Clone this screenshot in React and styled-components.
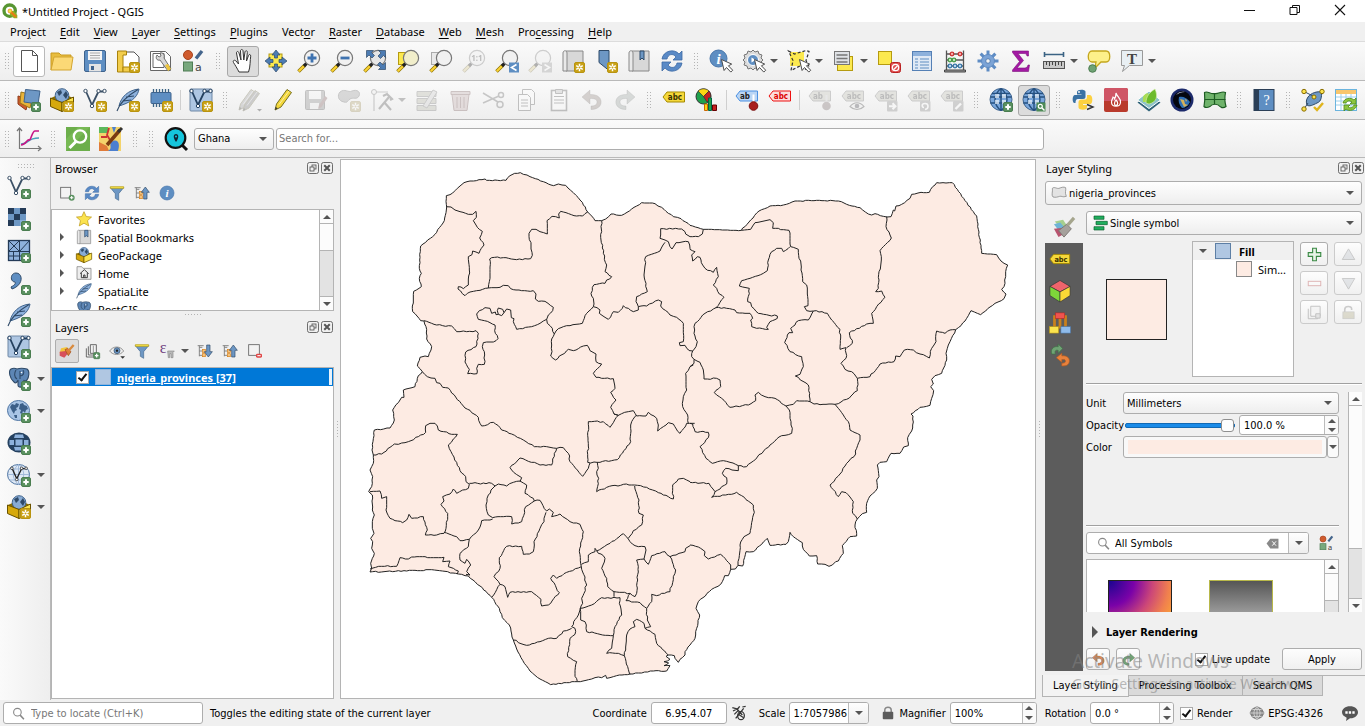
import React, { useState } from "react";
import styled, { createGlobalStyle, css } from "styled-components";

const UI_FONT = `"Noto Sans", "Open Sans", sans-serif`;
const FORM_FONT = `"DejaVu Sans Condensed", "DejaVu Sans", sans-serif`;

const Global = createGlobalStyle`
  *, *::before, *::after { box-sizing: border-box; }
  body { margin: 0; background: #f0f0f0; color: #000; font-family: ${UI_FONT}; font-size: 11px; }
  button, input, select { font: inherit; color: inherit; margin: 0; padding: 0; border: 0; background: none; }
  a { color: inherit; text-decoration: none; }
  svg { display: block; flex: none; }
`;

/* ---------- icon parts ---------- */

const BLUE = "#6d97c4";
const NAVY = "#2f4a68";

const Plus = () => (
  <g>
    <rect x="14.5" y="14.5" width="9" height="9" rx="1.5" fill="#5a9160" stroke="#4a7d50" />
    <path d="M19 16.3v5.4M16.3 19h5.4" stroke="#fff" strokeWidth="2" />
  </g>
);
const Star = () => (
  <g>
    <rect x="13.5" y="13.5" width="10" height="10" rx="1.5" fill="#c9a217" stroke="#b8930f" />
    <path d="M18.5 14.8v7.4M15.2 16.6l6.6 3.8M15.2 20.4l6.6-3.8" stroke="#fff" strokeWidth="1.5" />
    <circle cx="18.5" cy="18.5" r="1" fill="#c9a217" />
  </g>
);
const Cursor = () => (
  <path d="M12.5 10.5l2.6 11 2.4-3 4.3 4.6 1.9-1.9-4.3-4.4 3.3-1.7z" fill="#fff" stroke="#4c4c4c" />
);
const Lens = ({ fill = "#f1f1f1" }) => (
  <g>
    <path d="M1.5 22.5l6-6" stroke="#8f7400" strokeWidth="3.6" />
    <path d="M1.8 22.2l5-5" stroke="#fbd335" strokeWidth="2.2" />
    <path d="M7 17l2.6-2.6" stroke="#222" strokeWidth="3.2" />
    <circle cx="15" cy="9" r="7.6" fill={fill} stroke="#777" strokeWidth="1.2" />
  </g>
);
const Globe = ({ land = true }) => (
  <g>
    <ellipse cx="11.5" cy="11.5" rx="11" ry="10" fill={land ? "#a9c5e6" : "#dfe9f5"} stroke="#4f75a3" />
    {land ? (
      <path d="M3 8l2-3 3 1 1-2 3 1-1 3-2 1 1 2-2 1-1 3-2-3zM13 5l3-1 1 2 3 1 1 3-2 1-1 3-2-2-1 3-2-1 1-3-2-1zM7 16l3 0 0 3-2 0zM14 16l3 1-2 2z" fill="#3c5f88" />
    ) : (
      <path d="M1 11.5h21M3 6h17M3 17h17M11.5 1.5v20M11.5 1.5c-7 6-7 14 0 20M11.5 1.5c7 6 7 14 0 20" fill="none" stroke="#9db7d8" strokeWidth=".9" />
    )}
  </g>
);
const Tag = ({ fill = "#f5d83a", stroke = "#a58a00", ink = "#3a3200", label = "abc", y = 3 }) => (
  <g>
    <path d={`M1 ${y + 5}l4-5h17.5v10h-17.5z`} fill={fill} stroke={stroke} />
    <text x={label.length === 2 ? 10 : 13} y={y + 8} fontSize="8" fontWeight="700" textAnchor="middle" fill={ink} fontFamily="DejaVu Sans Condensed, sans-serif">{label}</text>
  </g>
);
const Vee = ({ ink = "#3b5066" }) => (
  <g fill="none" stroke={ink}>
    <path d="M3 3.5L9 17 15.5 3.5h5" strokeWidth="1.8" />
    <g fill="#fff" strokeWidth="1">
      <circle cx="2.5" cy="3" r="1.7" /><circle cx="9" cy="18" r="1.7" /><circle cx="15.5" cy="3" r="1.7" /><circle cx="21.5" cy="3" r="1.7" />
    </g>
  </g>
);
const Feather = () => (
  <g>
    <path d="M3 18C5 9 12 2 23 1c-1 6-5 12-17 16z" fill="#8db1dc" stroke="#3f638c" />
    <path d="M1 23C4 14 11 8 22 1.5M7 13l8-1M10 9l8-1" fill="none" stroke="#2f4a68" strokeWidth="1.1" />
  </g>
);
const Box = () => (
  <g>
    <path d="M1 10l11-5 11 5v8l-11 5.5-11-5.5z" fill="#8a6d00" />
    <circle cx="12" cy="7.5" r="6.8" fill="#88abd4" stroke="#3f638c" />
    <path d="M7 4l4-2 1 3-3 3zM13 7l3-4 2 4-2 4z" fill="#2f4a68" />
    <path d="M.5 10L12 14.500v9L.5 18.500z" fill="#d6a90c" stroke="#6b5300" />
    <path d="M23.500 9L12 14.500v9l11.500-5z" fill="#fbe34e" stroke="#6b5300" />
  </g>
);
const Elephant = () => (
  <g fill="#5d86b5" stroke="#2f4a68" strokeWidth="1.100">
    <path d="M4 2c2-1 4-1 6 0 3-1 6-1 10 0 3 2 2 8 0 11-1 1-3 1-3 0l-1 4c0 4-5 4-5 1v-5c-1 2-2 4-4 2C3 12 1 4 4 2z" />
    <path d="M9 3c-2 3-2 7 1 9M16 3c2 3 0 6-3 6M13 4v8" fill="none" />
    <circle cx="14.500" cy="5.500" r=".8" fill="#fff" stroke="none" />
  </g>
);
const Pencil = ({ fill = "#f3d73a" }) => (
  <g>
    <path d="M4 22l1.500-6L16 1.500l4.500 3L10 19z" fill={fill} stroke="#77701e" />
    <path d="M4 22l.700-3 2 1.300z" fill="#333" />
    <path d="M8 16.500L18 3" stroke="#fff" strokeWidth=".8" opacity=".7" />
  </g>
);
const Gear = () => (
  <g>
    <path d="M12 1.500v21M1.500 12h21M4.600 4.600l14.800 14.800M19.400 4.600L4.600 19.400" stroke="#5e8cc4" strokeWidth="3" />
    <circle cx="12" cy="12" r="6.500" fill="#7ba3d6" stroke="#5e8cc4" />
    <circle cx="12" cy="12" r="2.300" fill="#f3f3f3" stroke="#5580b5" />
  </g>
);
const Refresh = () => (
  <g fill="#5a8ac6" stroke="#3d6ba5" strokeWidth=".8">
    <path d="M2 10C3 2 14-1 19 5l3-3v9h-9l3-3c-3-4-8-3-9 2z" />
    <path d="M22 14c-1 8-12 11-17 5l-3 3v-9h9l-3 3c3 4 8 3 9-2z" />
  </g>
);
const Swatches = () => (
  <g>
    <circle cx="6" cy="6" r="4.500" fill="#cf5b2e" stroke="#a8431c" />
    <path d="M14 9.500L20 2" stroke="#44658c" strokeWidth="3.400" />
    <rect x="1.500" y="13" width="9" height="9" fill="#78a87d" stroke="#4f7c54" />
    <text x="13" y="22" fontSize="11" fill="#444" fontFamily="DejaVu Sans, sans-serif">a</text>
  </g>
);
const TreeArrow = ({ down }) => (
  <g>
    <path d="M3.500 4v16M3.500 6.500H8M3.500 12H8M3.500 18.500H8" fill="none" stroke="#777" strokeWidth="1.300" />
    <path d="M1 4h9" stroke="#777" strokeWidth="1.300" />
    <rect x="8" y="9.500" width="4.500" height="4.500" fill="#f3c27c" stroke="#d77f17" />
    <rect x="8" y="16" width="4.500" height="4.500" fill="#f3c27c" stroke="#d77f17" />
    <path d={down ? "M14.500 3h5v10h3.500L17 21l-6-8h3.500z" : "M14.500 21h5V11H23l-6-8-6 8h3.500z"} fill={BLUE} stroke={NAVY} />
  </g>
);
const Curl = ({ color, flip }) => (
  <path transform={flip ? "translate(24 0) scale(-1 1)" : undefined} d="M2 9l8-7v4.500c8-.5 12 4 11 9-1 4-5 6-10 6v-3.500c4 0 6-1.500 6-4s-2-3.500-7-3.500V16z" fill={color} stroke="rgba(0,0,0,.25)" />
);
const Funnel = () => (
  <g>
    <path d="M2 4h20l-7.500 9v10l-5-3v-7z" fill={BLUE} stroke="#46698f" />
    <path d="M2 2.500h20v2.500H2z" fill="#fce94f" stroke="#b59b10" />
  </g>
);
const Book = () => (
  <g>
    <path d="M5 2h17v20H5z" fill="#d8d8d8" stroke="#888" />
    <path d="M2 4c0-3 4-3 4 0v18H2z" fill="#e9e9e9" stroke="#888" />
  </g>
);
const WebGlobe = () => (
  <g>
    <circle cx="12" cy="11.500" r="11" fill="#7aa7dc" stroke="#3f638c" />
    <path d="M1.500 9h21M3 5.500h18M1.500 15h21M12 .5v22M12 .5c-8 6-8 16 0 22M12 .5c8 6 8 16 0 22" fill="none" stroke="#25507f" strokeWidth="1.400" />
    <path d="M6 6h4v4H6zM13 6h4v4h-4zM6 12h4v4H6zM13 12h4v4h-4z" fill="#e7f0fa" opacity=".75" />
  </g>
);
const OffTag = ({ label, children }) => (
  <g>
    <Tag fill="#bdbda0" stroke="#777" ink="#444" label={label} />
    {children}
  </g>
);
const GreyBadge = () => <rect x="13" y="13" width="10.500" height="10.500" rx="1" fill="#888" />;

const ICONS = {
  logo: <g><circle cx="11.500" cy="11.500" r="8.500" fill="#fff" stroke="#589632" strokeWidth="5" /><path d="M12 12l6 0 5 6v5h-5l-6-5z" fill="#93b023" /><path d="M12 12l9 9" stroke="#ee7913" strokeWidth="3" /><circle cx="12" cy="12" r="3" fill="#f0e64a" stroke="#ee7913" /></g>,
  newFile: <path d="M4.500 1.500h11l5 5v16h-16zM15.500 1.500v5h5" fill="#fff" stroke="#555" />,
  open: <g><path d="M1 21V4h8l2 2h10v4" fill="#e8bd3f" stroke="#c99a20" /><path d="M1 21L4 8h19l-2 13z" fill="#fbd976" stroke="#d3a530" /></g>,
  save: <g><rect x="1.500" y="1.500" width="21" height="21" rx="1.500" fill="#5e8ec2" stroke="#3f638c" /><rect x="5" y="2" width="14" height="9" fill="#f4f4f4" /><path d="M7 4h10M7 6.500h10M7 9h10" stroke="#aaa" /><rect x="6" y="15" width="12" height="7.500" fill="#e4e4e4" /><rect x="8" y="17" width="3" height="4" fill="#3f638c" /></g>,
  layout: <g><path d="M3 3h15l5 5v12H3z" fill="#fff" stroke="#555" /><path d="M1.500 2h9v4H7v17H1.500z" fill="#f2cd4c" stroke="#a8820c" /><path d="M7 18h7v5H7z" fill="#f2cd4c" stroke="#a8820c" /><Star /></g>,
  layoutMgr: <g><path d="M1.500 2.500h15l5 5v14h-20zM4 4.500h11v14H4z" fill="#fff" stroke="#666" /><path d="M8 6c-2 3 0 6 3 5l8 11 3-2-7-11c1-3-1-6-4-5l1 3-2 1z" fill="#d8d8d8" stroke="#555" strokeWidth=".8" /><path d="M16 16l3 6 3-2-3-5z" fill="#edc53d" /></g>,
  swatches: <Swatches />,
  hand: <path d="M8 23C6 19 4 16 2.500 13.500c-1-2 1-3 2.500-1.500l2.500 3L5.500 4c0-2 2-2 2.500 0l2 7-.5-9c0-2 2.500-2 2.500 0l.8 9 1.200-8c.5-2 2.500-1.500 2.300.5L15.500 12l2-5.500c.7-1.700 2.500-1 2.200.7C19 11 19.500 18 17.500 23z" fill="#fff" stroke="#333" />,
  panSel: <g><rect x="5" y="5" width="13" height="13" fill="#fce94f" stroke="#b59b10" /><path d="M12 1l4 5h-2.500v3h-3V6H8zM12 23l4-5h-2.500v-3h-3v3H8zM1 12l5-4v2.500h3v3H6V16zM23 12l-5-4v2.500h-3v3h3V16z" fill="#4d7cb3" stroke={NAVY} strokeWidth=".7" /></g>,
  zoomIn: <g><Lens /><path d="M15 4.500v9M10.500 9h9" stroke="#3f73b0" strokeWidth="2.800" /></g>,
  zoomOut: <g><Lens /><path d="M10.500 9h9" stroke="#3f73b0" strokeWidth="2.800" /></g>,
  zoomFull: <g><Lens fill="#e6e6e6" /><path d="M3.500 1.500h7L8.500 3.500l3 3-2.500 2.500-3-3-2.500 2.500zM22.500 1.500v7L20.500 6.500l-3 3L15 7l3-3-2.500-2.500zM22.500 20.500h-7l2-2-3-3 2.500-2.500 3 3 2.500-2.500z" fill="#4d7cb3" stroke={NAVY} strokeWidth=".7" /></g>,
  zoomSel: <g><rect x="2.500" y="3.500" width="12" height="12" fill="#fce94f" stroke="#b59b10" /><Lens fill="#f1eecb" /></g>,
  zoomLayer: <g><rect x="2.500" y="3.500" width="12" height="12" fill="#e9e9e9" stroke="#aaa" /><Lens /></g>,
  zoom11: <g><Lens /><text x="15" y="12" fontSize="8" fontWeight="700" textAnchor="middle" fill="#444">1:1</text></g>,
  zoomPrev: <g><Lens /><rect x="14" y="13.500" width="10" height="10" fill="#5e8ec2" /><path d="M21.500 15.500l-5 3 5 3" fill="none" stroke="#fff" strokeWidth="1.600" /></g>,
  zoomNext: <g><Lens /><rect x="14" y="13.500" width="10" height="10" fill="#999" /><path d="M16.500 15.500l5 3-5 3" fill="none" stroke="#fff" strokeWidth="1.600" /></g>,
  mapNew: <g><Book /><Star /></g>,
  bookmarkNew: <g><path d="M5 1.500h10v20l-5-4-5-4z" fill={BLUE} stroke={NAVY} /><Star /></g>,
  bookmarks: <g><Book /><path d="M13 2h4v9l-2-2-2 2z" fill={BLUE} stroke={NAVY} /></g>,
  refresh: <Refresh />,
  identify: <g><circle cx="9.500" cy="9.500" r="8.500" fill="#5e8ec2" stroke="#4775aa" /><text x="9.500" y="15" fontSize="15" fontWeight="700" fontStyle="italic" textAnchor="middle" fill="#fff" fontFamily="Liberation Serif, serif">i</text><Cursor /></g>,
  action: <g><path d="M11 1l2 2 3-1 1 3 3 1-1 3 2 2-2 2 1 3-3 1-1 3-3-1-2 2-2-2-3 1-1-3-3-1 1-3-2-2 2-2-1-3 3-1 1-3 3 1z" fill="#dcdcdc" stroke="#777" /><circle cx="11" cy="11" r="5.500" fill="#5e8ec2" stroke="#fff" /><path d="M9.500 8.500v5l4-2.500z" fill="#fff" /><Cursor /></g>,
  select: <g><path d="M3 3h14v14H3z" fill="#fce94f" /><path d="M1.500 2l6 3L19 1.500l3 1-3 9 3 6-4 3-4-4-10 5 2-10z" fill="none" stroke="#333" strokeDasharray="3 2" strokeWidth="1.200" /><Cursor /></g>,
  selectForm: <g><rect x="5.500" y="7.500" width="15" height="14" fill="#fce94f" stroke="#b59b10" /><rect x="2.500" y="2.500" width="15" height="13" fill="#dfe2e6" stroke="#777" /><path d="M4.500 6h11M4.500 9.500h11M4.500 13h11" stroke="#777" strokeWidth="1.300" /></g>,
  deselect: <g><rect x="1.500" y="2.500" width="13" height="13" fill="#fce94f" stroke="#b59b10" /><rect x="13.500" y="13.500" width="10" height="10" rx="2" fill="#e05050" stroke="#b92020" /><circle cx="18.500" cy="18.500" r="3.200" fill="none" stroke="#fff" strokeWidth="1.300" /><path d="M16.500 20.700l4-4" stroke="#fff" strokeWidth="1.300" /></g>,
  table: <g><rect x="2.500" y="2.500" width="19" height="19" fill="#dfe9f5" stroke="#5580b5" /><path d="M3 3h18v4H3z" fill="#8db1dc" /><path d="M5 10h3M5 13h3M5 16h3M5 19h3M10 10h9M10 13h9M10 16h9M10 19h9" stroke="#5e8ec2" strokeWidth="1.200" /></g>,
  abacus: <g fill="none"><path d="M3.500 1.500v20M20.500 1.500v20M3.500 5h17M3.500 11h17M3.500 17h17" stroke="#555" strokeWidth="1.300" /><path d="M1.500 21h21v2h-21z" fill="#999" stroke="#444" /><g strokeWidth="1.300"><g fill="#f7b0b0" stroke="#c33"><circle cx="9" cy="5" r="1.800" /><circle cx="17" cy="5" r="1.800" /></g><g fill="#c8ecc5" stroke="#4a9a4a"><circle cx="7" cy="11" r="1.800" /><circle cx="11" cy="11" r="1.800" /></g><g fill="#c4dcf2" stroke="#3a78a8"><circle cx="7" cy="17" r="1.800" /><circle cx="12" cy="17" r="1.800" /><circle cx="17" cy="17" r="1.800" /></g></g></g>,
  gear: <Gear />,
  sigma: <path d="M3.500 2h16v5h-1.500c-.5-2-1-2.500-3-2.500H9l5.500 7L8 19h7.500c2 0 3-1 3.500-3h1.500l-1 6.500h-16V21l7-8.500-7-9z" fill="#a31aa3" stroke="#7c107c" strokeWidth=".6" />,
  ruler: <g><path d="M2 5.500h20M2.500 3v5M21.500 3v5" stroke="#3b6384" strokeWidth="1.600" /><rect x="1.500" y="12.500" width="21" height="7" fill="#c9c9c9" stroke="#555" /><path d="M4.500 13v3M7.500 13v4M10.500 13v3M13.500 13v4M16.500 13v3M19.500 13v4" stroke="#444" /></g>,
  tips: <g><path d="M5 2h14c5 0 5 11 0 11h-5l-6 6 1-6H5C0 13 0 2 5 2z" fill="#fdf08a" stroke="#c4a61c" strokeWidth="1.300" /><circle cx="5.500" cy="19.500" r="3.800" fill="#6fa374" stroke="#4d7d52" /></g>,
  textNote: <g><path d="M1.500 1.500h21v15h-13l-7 6 2-6h-3z" fill="#e8eff3" stroke="#999" /><text x="12" y="14.500" fontSize="15" fontWeight="700" textAnchor="middle" fill="#444" fontFamily="Liberation Serif, serif">T</text></g>,

  dsManager: <g><path d="M1 8l11 3-3 11-8-6z" fill="#cf5b2e" stroke="#8f3c18" /><path d="M4 4l12 3-3 13-10-5z" fill="#e8b33a" stroke="#9a7414" /><path d="M8.500 1.500L23 3l-2 13-14-2z" fill={BLUE} stroke="#3f638c" /><Plus /></g>,
  newGpkg: <g><Box /><Star /></g>,
  newShp: <g><Vee /><Star /></g>,
  newSpatialite: <g><Feather /><Star /></g>,
  memory: <g><path d="M4.500 1v18M7.500 1v18M10.500 1v18M13.500 1v18M16.500 1v18M19.500 1v18" stroke="#3b6384" strokeWidth="1.300" /><rect x="2" y="4.500" width="20" height="11" rx="1" fill="#5e8ec2" stroke="#3f638c" /><Star /></g>,
  virtual: <g><rect x="1" y="1" width="22" height="22" rx="1" fill="#aec6e2" stroke="#6f88a6" /><Vee ink="#24405f" /><Star /></g>,
  edits: <g><g transform="translate(-3 0)"><Pencil fill="#999" /></g><g transform="translate(1 1)"><Pencil fill="#777" /></g><path d="M19 21h5l-2.500 2.500z" fill="#222" /></g>,
  pencil: <Pencil />,
  saveEdits: <g><rect x="1.500" y="2.500" width="19" height="19" rx="1" fill="#888" stroke="#555" /><rect x="5" y="3" width="12" height="8" fill="#f4f4f4" /><rect x="6" y="15" width="9" height="6" fill="#eee" /><path d="M14 21l1-4 6-9 2.500 2-6 9z" fill="#a55" /></g>,
  addPoly: <g><path d="M3 4c5-4 8 1 12-1 5-2 9 1 7 5s-6 1-9 3-2 4-6 3C1 13 0 7 3 4z" fill="#9a9a9a" stroke="#666" /><Star /></g>,
  vertex: <g><path d="M4 23V4h14" fill="none" stroke="#777" strokeWidth="1.200" /><circle cx="4" cy="4" r="2.500" fill="#eee" stroke="#666" /><path d="M9 21L19 9M13 8l4-2 5 5-2 1M14 14l7 8" fill="none" stroke="#555" strokeWidth="2.200" /></g>,
  attrs: <g fill="#b5b78f" stroke="#777"><path d="M2 3.500h19v5H2zM2 10.500h19v5H2zM2 17.500h19v5H2z" /><path d="M8 18L18 2l4 2-10 16z" fill="#ccc" /></g>,
  trash: <g fill="#dba5a5" stroke="#9c5050"><path d="M4 6.500h17l-2 16H6zM3 3.500h19v3H3z" /><path d="M9 9v11M12.500 9v11M16 9v11" /></g>,
  cut: <g fill="none" stroke="#666" strokeWidth="1.500"><path d="M2 5l15 9M2 15l16-7" /><circle cx="20" cy="7" r="2.500" /><circle cx="19" cy="16.500" r="3" /></g>,
  copy: <g fill="#fff" stroke="#555"><path d="M8.500 1.500h9l3 3v12h-12z" /><path d="M4.500 6.500h9l3 3v13h-12z" /><path d="M7 12h7M7 15h7M7 18h7" /></g>,
  paste: <g fill="#fff" stroke="#555"><rect x="4.500" y="2.500" width="15" height="20" strokeWidth="1.600" /><path d="M7 8.500h10M7 12h10M7 15h10" /><path d="M8.500 1.500h7v4h-7z" fill="#bbb" /></g>,
  undo: <Curl color="#a08070" />,
  redo: <Curl color="#8fa39a" flip />,
  label: <Tag y={4} />,
  labelTab: <Tag y={7} />,
  diagram: <g><circle cx="8.500" cy="8.500" r="7.500" fill="#1fa04c" stroke="#333" /><path d="M8.500 8.500L3 3C6 0 11 0 14 3z" fill="#fbd713" stroke="#333" strokeWidth=".7" /><path d="M8.500 8.500L14 3c3 3 2 8-2 11z" fill="#c42020" stroke="#333" strokeWidth=".7" /><path d="M9.500 16h3v6.500h-3z" fill="#fbd713" stroke="#c60" /><path d="M13.500 10h3v12.500h-3z" fill="#1fa04c" stroke="#064" /><path d="M17.500 17h4v5.500h-4z" fill="#c42020" stroke="#600" /></g>,
  labelPin: <g><Tag fill="#b9d5f5" stroke="#4a90e2" ink="#222" label="ab" /><path d="M18.500 6.500v9" stroke="#fff" strokeWidth="2" /><circle cx="18.500" cy="18" r="4.300" fill="#a81e1e" stroke="#7b1010" /></g>,
  labelRed: <Tag fill="#fbdcdc" stroke="#e11" ink="#d00" />,
  labelPinOff: <OffTag label="ab"><path d="M18.500 7v9" stroke="#ccc" strokeWidth="2" /><circle cx="18.500" cy="18" r="4.300" fill="#866" /></OffTag>,
  labelEye: <OffTag><path d="M9 18.500c4-5 10-5 14 0-4 4-10 4-14 0z" fill="#eee" stroke="#444" strokeWidth="1.200" /><circle cx="16" cy="18" r="2.300" fill="#445" /></OffTag>,
  labelMove: <OffTag><GreyBadge /><path d="M15 18.200h6M18.500 15.200l3 3-3 3" fill="none" stroke="#fff" strokeWidth="2" /></OffTag>,
  labelRotate: <OffTag><GreyBadge /><path d="M18 21.500c4-1 4-6 0-6s-3 4-1 4" fill="none" stroke="#fff" strokeWidth="1.600" /></OffTag>,
  labelEdit: <OffTag><GreyBadge /><path d="M15.500 21l5.500-5.500" stroke="#fff" strokeWidth="2.400" /></OffTag>,
  webAdd: <g><WebGlobe /><Plus /></g>,
  webSearch: <g><WebGlobe /><rect x="14.500" y="14.500" width="9" height="9" fill="#4e8b57" /><circle cx="18.300" cy="18.300" r="2" fill="none" stroke="#fff" strokeWidth="1.200" /><path d="M20 20l2.500 2.500" stroke="#fff" strokeWidth="1.400" /></g>,
  python: <g><path d="M6 6.500V4c0-3 8-3 8.500-.5V9c0 2-2 2-4 2H7c-2 0-2.500 2-2.500 4H3.500C1 15 1 7 4 7h6.500v-.6z" fill="#3a72a4" /><path d="M16 7h3c3 0 3 9 .5 9H12v1h4v2.500c0 3-8 3-8.500 0V14c0-2 2-2.500 4-2.500H14c2 0 2-2 2-4.500z" fill="#fcd141" /><circle cx="8" cy="4" r=".9" fill="#fff" /><path d="M16 16.500l6 2.500-6 2.500" fill="none" stroke="#333" strokeWidth="1.400" /></g>,
  fire: <g><rect x="0" y="0" width="24" height="24" rx="2" fill="#b93a2c" /><path d="M0 2c0-1 1-2 2-2h20c1 0 2 1 2 2v11H0z" fill="#cf5566" /><path d="M12 5c1 4 5 5 4.500 9.500-.5 5-8.500 5-9 0C7.500 11 9 11 9 9c1 0 1.500 1 1.500 2C12 9 12 7 12 5zM12 12c2 2 2.500 5 0 5.500-2.500-.5-1.500-3.500 0-5.500z" fill="none" stroke="#fff" strokeWidth="1.200" /></g>,
  leaf: <g><path d="M.5 14.500L12 7l11.500 7.500L12 23.500z" fill="#2f6378" /><path d="M.5 12L12 3l11.500 9L12 20.500z" fill="#8dc3c9" stroke="#fff" /><path d="M6 14C5 7 8 6 11 5l3 9z" fill="#a9dd55" /><path d="M9 15c0-7 4-11 9-14 3 7 2 13-6 15z" fill="#6cbb2c" stroke="#d8f0b0" strokeWidth=".6" /></g>,
  earth: <g><circle cx="12" cy="12" r="11.500" fill="#1c2a6b" /><circle cx="12" cy="12" r="9" fill="#05070f" /><path d="M9 9c4-1 8 1 11 5-2 4-5 6-8 6-3-3-4-7-3-11z" fill="#2f6fb5" /><path d="M10 11l4 1 1 4 3 1-4 2zM15 11l2 1-1 2z" fill="#d7b15a" /><path d="M6 7c2-3 6-4 9-3-4 0-6 1-9 3z" fill="#cdd6ee" /></g>,
  clip: <g fill="#6fb36b" stroke="#1d5c22" strokeWidth="1.200"><path d="M1.500 4.500c3-2 6 2 10 1 4 1 7-3 11-1-1 5-1 9 .5 14-4 3-5 0-6 0-2-3-8-3-10 0-2 1-4 2-6 0 1-5 1-9 .5-14z" /><path d="M1.500 11.500h21M11.500 5.500v10.500" /></g>,
  help: <g><rect x="2" y="1.500" width="20" height="21" fill="#5e8ec2" stroke="#2b3f57" /><rect x="2" y="1.500" width="5" height="21" fill="#2b3f57" /><text x="14.500" y="17" fontSize="14" textAnchor="middle" fill="#fff" fontFamily="Liberation Serif, serif">?</text></g>,
  topology: <g><path d="M7 9c3-4 9-6 14-5-1 5 0 9-5 11-4 2-8 4-10 2-1-3-1-5 1-8z" fill="#6d97c4" stroke="#2f4a68" /><path d="M3 3.500L12 8M3 21l4-6" stroke="#2f4a68" /><g fill="#fbe34e" stroke="#8a6d00"><circle cx="3" cy="3.500" r="2.200" /><circle cx="21" cy="3.500" r="2.200" /><circle cx="13" cy="9" r="2" /><circle cx="3" cy="21" r="2.200" /></g><path d="M13 19l3 3 6-7" fill="none" stroke="#e0b41c" strokeWidth="2.400" /></g>,
  gridSync: <g><rect x="1.500" y="1.500" width="21" height="21" fill="#fff" stroke="#6bb4de" /><path d="M2 2h20v4H2z" fill="#f8c66d" /><path d="M2 9h20M2 13h20M2 17h20M7 6v16M12 6v16M17 6v16" stroke="#9fd0ea" /><path d="M9 15c1-5 8-6 11-3l2-2v6h-6l2-2c-3-2-5-1-6 1zM23 17c-1 5-8 7-11 4l-2 2v-6h6l-2 2c3 2 5 0 6-2z" fill="#8cc63f" stroke="#4f8a17" strokeWidth=".8" /></g>,

  chart: <g fill="none"><path d="M2.500 1v20.500H24M0 4l2.500-3L5 4M21 19l3 2.500-3 2.500" stroke="#777" strokeWidth="1.200" /><path d="M4 17c9 0 5-6 18-6" stroke="#4aa0b8" strokeWidth="1.600" /><path d="M4 18c5 0 6-6 8-5s3-9 6-9h4" stroke="#c71585" strokeWidth="1.600" /></g>,
  qms: <g><rect width="24" height="24" fill="#6cae4b" /><path d="M0 24V12L12 0h12z" fill="#7fbf5a" opacity=".6" /><circle cx="14" cy="9.500" r="6.200" fill="none" stroke="#fff" strokeWidth="2.300" /><path d="M10 14.500L3.500 21" stroke="#fff" strokeWidth="3" /></g>,
  osm: <g><rect width="22" height="24" fill="#f3d36b" /><path d="M0 0h9v6H0z" fill="#5cb85c" /><path d="M0 15l8 4 2 5H0z" fill="#e07b39" /><path d="M9 24c6-3-1-8 5-10s7 4 5 10zM13 0l4 0-2 6z" fill="#4b7fd0" /><path d="M10 1l-2 7 3 5M2 10h6" fill="none" stroke="#c33" strokeWidth="1.800" /><path d="M8 18L21 3" stroke="#7a3b10" strokeWidth="3.500" /><path d="M19 5l4-4" stroke="#333" strokeWidth="3" /></g>,
  osmSearch: <g><path d="M17 17l6 6" stroke="#111" strokeWidth="3" /><circle cx="11.500" cy="11" r="9.800" fill="#15c5dc" stroke="#111" strokeWidth="2.200" /><path d="M12 15c-3-4-3-8 0-8s3 4 0 8z" fill="#123" /><circle cx="12" cy="9.500" r="1" fill="#15c5dc" /></g>,

  addVector: <g><Vee /><Plus /></g>,
  addRaster: <g><path d="M1 1h18v18H1z" fill={BLUE} /><path d="M1 1h6v6H1zM13 1h6v6h-6zM7 7h6v6H7zM1 13h6v6H1z" fill="#243b57" /><path d="M13 13h6v6h-6z" fill="#88aeda" /><Plus /></g>,
  addMesh: <g><rect x="1.500" y="1.500" width="21" height="20" fill="#8db1dc" stroke="#243b57" strokeWidth="1.300" /><path d="M1.500 12.500h21M12.500 1.500v20M1.500 1.500l11 11M12.500 1.500l-11 11M22.500 1.500l-10 11M1.500 17h21M6.500 12.500v9" stroke="#243b57" fill="none" /><Plus /></g>,
  addCsv: <g><path d="M9 2c7 0 8 12-4 16l-1-2c4-2 5-4 4-5-5 0-5-9 1-9z" fill="#5e8ec2" stroke={NAVY} /><Plus /></g>,
  addSpatialite: <g><Feather /><Plus /></g>,
  addVirtual: <g><rect x="1" y="1" width="21" height="21" rx="1" fill="#aec6e2" stroke="#6f88a6" /><Vee ink="#24405f" /><Plus /></g>,
  addPg: <g><Elephant /><Plus /></g>,
  addWms: <g><Globe /><Plus /></g>,
  addXyz: <g><ellipse cx="12" cy="11.500" rx="11.500" ry="10" fill="#24405f" /><path d="M8 3.500h8l1 3.500H7zM2.500 9H7v5H2.500zM8.500 8.500h7v6h-7zM17 9h4.500v5H17zM7 16h10l-1 3.500H8z" fill="#8db1dc" /><Plus /></g>,
  addWfs: <g><Globe land={false} /><g transform="translate(3 3) scale(.75)"><Vee ink="#222" /></g><Plus /></g>,

  addSel: <g><rect x="2.500" y="3.500" width="15" height="16" fill="#f3f3f3" stroke="#666" strokeWidth="1.300" /><circle cx="19" cy="19" r="4.500" fill="#5a9160" /><path d="M19 16.500v5M16.500 19h5" stroke="#fff" strokeWidth="1.600" /></g>,
  removeLayer: <g><rect x="2.500" y="2.500" width="16" height="16" fill="#f3f3f3" stroke="#666" strokeWidth="1.300" /><rect x="13.500" y="16" width="9" height="6" rx="2" fill="#e04848" /><path d="M15.500 19h5" stroke="#fff" strokeWidth="1.600" /></g>,
  funnel: <Funnel />,
  collapse: <TreeArrow />,
  expand: <TreeArrow down />,
  info: <g><circle cx="12" cy="12" r="10.500" fill="#5e8ec2" stroke="#4775aa" /><text x="12" y="18" fontSize="17" fontWeight="700" fontStyle="italic" textAnchor="middle" fill="#fff" fontFamily="Liberation Serif, serif">i</text></g>,
  brush: <g><path d="M3 8l9-2 3 6-6 6-8-3z" fill="#f3c53d" /><path d="M1 13l9-1 3 4-5 6-7-3z" fill="#d7515b" /><path d="M9 10l4-2 5 5-4 6z" fill="#e07b39" stroke="#9d4c13" /><path d="M14 12l8-9" stroke="#d98a3d" strokeWidth="3.500" /></g>,
  stackAdd: <g fill="#f3f3f3" stroke="#555" strokeWidth="1.300"><path d="M3.500 8v13h11M6.500 5v13h11M9.500 2.500h9v13h-9z" /><path d="M14 4v12" stroke="#888" /><Plus /></g>,
  eye: <g><path d="M1 12C6 4 17 4 22 12c-5 7-16 7-21 0z" fill="#eee" stroke="#888" strokeWidth="1.300" /><circle cx="12" cy="11.500" r="4.500" fill={BLUE} stroke={NAVY} /><circle cx="12" cy="11.500" r="1.800" fill="#222" /><path d="M17 20h7l-3.500 3.500z" fill="#333" /></g>,
  epsilon: <g><text x="1" y="15" fontSize="24" fill="#6e3c7e" fontFamily="Liberation Serif, serif">ε</text><path d="M13 12h10l-2 2v8h-3v-6h-2v6h-2z" fill="#b9b9b9" stroke="#888" /></g>,

  favorite: <path d="M12 1l3.300 7.300 8 .8-6 5.300 1.800 8L12 18.300 4.900 22.400l1.800-8-6-5.300 8-.8z" fill="#fbe34e" stroke="#b8930f" />,
  book: <g><Book /><path d="M13 2h5v10l-2.500-2-2.500 2z" fill={BLUE} stroke={NAVY} /></g>,
  gpkg: <Box />,
  home: <g><path d="M1.500 21.500v-19h7l2 2.500h12v16.500z" fill="#eee" stroke="#777" /><path d="M6 13l6.500-6 6.500 6M8 12v7h9v-7M11.500 19v-4h2v4" fill="none" stroke="#333" strokeWidth="1.400" /></g>,
  feather: <Feather />,
  elephant: <Elephant />,

  tabBrush: <g><path d="M2 6l9-2 4 6-7 3z" fill="#a6cf8e" /><path d="M1 9l7-2 5 6-6 4z" fill="#6fb4d6" /><path d="M1 14l8-1 4 6-7 4z" fill="#b8546f" /><path d="M6 16l9-7 5 5-8 9z" fill="#a5a19c" stroke="#77736e" /><path d="M16 10l7-8" stroke="#a5a58d" strokeWidth="3.500" /></g>,
  cube: <g stroke="#333" strokeWidth=".7"><path d="M12 .5L23 7l-11 6L1 7z" fill="#f0646b" /><path d="M1 7l11 6v11L1 17z" fill="#7ed63a" /><path d="M23 7l-11 6v11l11-7z" fill="#fbd936" /></g>,
  maskTree: <g><path d="M12 5v13M6 16V5h12v11" fill="none" stroke="#c9801c" strokeWidth="3" /><rect x="7" y="1" width="10" height="6" fill="#ef5350" stroke="#b92020" strokeWidth=".6" /><rect x=".5" y="16" width="10" height="7" fill="#fbe34e" stroke="#b8930f" strokeWidth=".6" /><rect x="13" y="16" width="10.500" height="7" fill="#8fbbea" stroke="#4775aa" strokeWidth=".6" /></g>,
  history: <g><path d="M3 11C1 5 6 2 10 3V0l5 5-5 5V7C7 6 6 8 7 11z" fill="#6fa374" stroke="#3c7044" strokeWidth=".7" /><path d="M8 15l6-5v3c7-1 9 4 8 7-1 4-5 4-8 4v-3c4 0 5-2 3-4h-3v3z" fill="#e8813c" stroke="#b55a1e" strokeWidth=".7" /></g>,
  polygon: <path d="M2 5c3-3 7 1 10 0s7-3 10-1c1 5-2 6 1 13-6 2-7-1-10 0s-6 2-10 1C0 15 3 10 2 5z" fill="#e3e3e3" stroke="#777" />,
  single: <g fill="#1fae5e" stroke="#0a5c2c"><path d="M3 1.500h15v5H3zM6 9.500h17v5H6zM3 17.500h15v5H3z" /></g>,
  plusBig: <path d="M9 2h6v7h7v6h-7v7H9v-7H2V9h7z" fill="#e9f4e8" stroke="#3b8a45" strokeWidth="1.800" />,
  minusBig: <rect x="2" y="8.500" width="20" height="7" fill="#fff" stroke="#b55" strokeWidth="1.600" />,
  dup: <g fill="#eee" stroke="#777" strokeWidth="1.600"><path d="M2 6v16h15v-3M6 2h15v16H6z" /><path d="M14 14h7v7h-7z" fill="#ccc" /></g>,
  lockOpen: <g><path d="M6 11V7c0-6 11-6 11-1v2" fill="none" stroke="#888" strokeWidth="2.600" /><rect x="3" y="11" width="18" height="11" fill="#b7b292" stroke="#888" /></g>,
  triUp: <path d="M12 3l10 17H2z" fill="#c3c8ce" stroke="#777" strokeWidth="1.300" />,
  triDown: <path d="M12 21L2 4h20z" fill="#c3c8ce" stroke="#777" strokeWidth="1.300" />,
  undoColor: <Curl color="#e08a52" />,
  redoColor: <Curl color="#72a577" flip />,
  search: <g fill="none" stroke="#888" strokeWidth="2"><circle cx="10" cy="9.500" r="7" /><path d="M15 15l7 7.500" strokeWidth="2.800" /></g>,
  clear: <g><path d="M1 12l7-9h15v18H8z" fill="#888" /><path d="M11.500 8l7 8M18.500 8l-7 8" stroke="#fff" strokeWidth="1.800" /></g>,
  float: <g fill="none" stroke="#555" strokeWidth="1.700"><rect x="1" y="1" width="22" height="22" rx="4" /><rect x="10" y="6" width="8" height="8" /><rect x="6" y="10" width="8" height="8" fill="#f0f0f0" /></g>,
  close: <g fill="none" stroke="#555"><rect x="1" y="1" width="22" height="22" rx="4" strokeWidth="1.700" /><path d="M6.500 6.500l11 11M17.500 6.500l-11 11" strokeWidth="4" /></g>,
  mouse: <g fill="none" stroke="#333" strokeWidth="1.900"><path d="M2 4l8 2 3-4M3 9l6-3 8 9M7 20l12-15M17 3l5-1M11 8l-6 6" /><ellipse cx="15" cy="16" rx="5" ry="6" /><path d="M11 14l8 5" /></g>,
  lock: <g><path d="M6.500 11V7c0-6.500 11-6.500 11 0v4" fill="none" stroke="#888" strokeWidth="2.600" /><rect x="3" y="10" width="18" height="12.500" rx="1.500" fill="#5c5c5c" /></g>,
  crs: <g fill="#888" stroke="#555"><path d="M12 1l8 4 4 7-4 7-8 4-8-4-4-7 4-7z" /><path d="M0 12h24M4 6h16M4 18h16M12 1v22M12 1c-7 7-7 15 0 22M12 1c7 7 7 15 0 22" fill="none" stroke="#ddd" strokeWidth="1.300" /></g>,
  bubble: <g><path d="M12 2c7 0 12 4 12 9s-5 9-11 9l-1 0-6 4 1-5C3 17 0 15 0 11 0 6 5 2 12 2z" fill="#555" /><path d="M5 9.500h3.500v3.500H5zM10.200 9.500h3.500v3.500h-3.500zM15.500 9.500H19v3.500h-3.500z" fill="#fff" /></g>,
  minimize: <path d="M0 13h22" stroke="#111" strokeWidth="2" />,
  restore: <path d="M2 7h14v14H2zM7 7V3h14v14h-5" fill="none" stroke="#111" strokeWidth="2" />,
  quit: <path d="M2 2l20 20M22 2L2 22" stroke="#111" strokeWidth="2.200" />,
};

const Icon = ({ name, size = 24 }) => (
  <svg width={size} height={size} viewBox="0 0 24 24" overflow="visible" aria-hidden="true">{ICONS[name]}</svg>
);

/* ---------- shared controls ---------- */

const Caret = styled.span`
  display: block;
  flex: none;
  width: 0;
  height: 0;
  border: ${(p) => p.$size || 4}px solid transparent;
  ${(p) =>
    p.$dir === "up"
      ? css`border-top: 0; border-bottom-color: #555;`
      : p.$dir === "right"
      ? css`border-right: 0; border-left-color: #555;`
      : css`border-bottom: 0; border-top-color: #555;`}
`;

const Field = styled.div`
  display: flex;
  align-items: center;
  flex: ${(p) => (p.$grow ? "1" : "none")};
  min-width: 0;
  width: ${(p) => (p.$w ? p.$w + "px" : "auto")};
  height: ${(p) => p.$h || 22}px;
  border: 1px solid #adadad;
  border-radius: 3px;
  background: ${(p) => (p.$combo ? "linear-gradient(#fefefe, #eeeeee)" : "#fff")};
  font-family: ${FORM_FONT};
  font-size: 11px;
  overflow: hidden;
`;

const Combo = styled.select`
  appearance: none;
  flex: 1;
  min-width: 0;
  height: 100%;
  padding: 0 0 0 ${(p) => p.$pad ?? 3}px;
  outline: none;
`;

const CaretSlot = styled.span`
  display: flex;
  align-items: center;
  justify-content: center;
  width: ${(p) => p.$w || 20}px;
  height: 100%;
  pointer-events: none;
  ${(p) => p.$split && css`border-left: 1px solid #bbb; background: linear-gradient(#fefefe, #eee);`}
`;

const TextInput = styled.input`
  flex: 1;
  min-width: 0;
  width: 0;
  height: 100%;
  padding: 0 ${(p) => p.$pad ?? 4}px;
  outline: none;
  text-align: ${(p) => p.$align || "left"};
  &::placeholder { color: #777; opacity: 1; }
`;

const SpinButtons = styled.span`
  display: flex;
  flex-direction: column;
  width: 14px;
  height: 100%;
  border-left: 1px solid #bbb;
  background: #fafafa;
`;
const SpinButton = styled.button`
  flex: 1;
  display: flex;
  align-items: center;
  justify-content: center;
`;

const Spin = ({ w, h, id, value, label }) => {
  const [v, setV] = useState(value);
  return (
    <Field $w={w} $h={h}>
      <TextInput id={id} aria-label={label} value={v} onChange={(e) => setV(e.target.value)} />
      <SpinButtons>
        <SpinButton aria-label="Increase"><Caret $dir="up" $size={4} /></SpinButton>
        <SpinButton aria-label="Decrease"><Caret $size={4} /></SpinButton>
      </SpinButtons>
    </Field>
  );
};

const Check = styled.input.attrs({ type: "checkbox" })`
  appearance: none;
  flex: none;
  width: 13px;
  height: 13px;
  background: #fff;
  border: 1px solid #aaa;
  display: flex;
  align-items: center;
  justify-content: center;
  &:checked::after {
    content: "";
    width: 5px;
    height: 9px;
    border: solid #111;
    border-width: 0 2px 2px 0;
    transform: rotate(38deg);
    margin-bottom: 2px;
  }
`;

const CheckLabel = styled.label`
  display: flex;
  align-items: center;
  gap: 4px;
  font-family: ${FORM_FONT};
  font-size: 11px;
  white-space: nowrap;
`;

/* ---------- window chrome ---------- */

const Window = styled.div`
  position: relative;
  display: flex;
  flex-direction: column;
  min-height: 100vh;
  background: #f0f0f0;
`;

const TitleBar = styled.header`
  display: flex;
  align-items: center;
  gap: 4px;
  height: 22px;
  padding: 0 19px 0 2px;
  background: #fff;
`;
const Title = styled.h1`
  flex: 1;
  margin: 0;
  font-size: 11px;
  font-weight: 400;
`;
const WindowButton = styled.button`
  display: flex;
  margin-left: 29px;
  padding-bottom: 3px;
`;

const MenuBar = styled.nav`
  display: flex;
  align-items: center;
  height: 20px;
  padding-left: 3px;
  border-bottom: 1px solid #dcdcdc;
`;
const MenuItem = styled.button`
  padding: 0 7px;
  line-height: 18px;
  text-align: left;
  font-size: 11px;
  u { text-underline-offset: 2px; }
`;

const Toolbar = styled.div`
  display: flex;
  align-items: center;
  gap: 1px;
  height: ${(p) => p.$h || 39}px;
  padding-left: 2px;
  border-bottom: 1px solid #b9b9b9;
  background: linear-gradient(#fafafa, #eeeeee);
`;

const dots = css`
  background-image: radial-gradient(circle, #b4b4b4 0 0.8px, transparent 1px);
  background-size: 3px 3px;
`;
const Grip = styled.span`
  flex: none;
  width: 6px;
  height: 18px;
  margin: 0 ${(p) => (p.$first ? 2 : 5)}px 0 ${(p) => (p.$first ? 2 : 4)}px;
  ${dots}
`;
const Divider = styled.span`
  flex: none;
  width: 1px;
  height: 20px;
  margin: 0 3px 0 2px;
  background: #cfcfcf;
`;

const ToolButton = styled.button`
  flex: none;
  display: flex;
  align-items: center;
  gap: 4px;
  width: ${(p) => (p.$drop ? 44 : 32)}px;
  height: 31px;
  padding: 0 3px;
  border: 1px solid transparent;
  border-radius: 3px;
  & > * { ${(p) => p.$off && css`opacity: 0.32; filter: grayscale(0.6);`} }
  ${(p) => p.$on && css`background: #dcdcdc; border-color: #a8a8a8;`}
  ${(p) => p.$raised && css`background: #fff; border-color: #b9b9b9;`}
`;

const SearchGroup = styled.div`
  display: flex;
  flex: 0 1 850px;
  gap: 2px;
  margin-left: 1px;
  min-width: 0;
`;

const ROW_1 = [
  "grip0", ["newFile", "New Project", "raised"], ["open", "Open Project"], ["save", "Save Project"], ["layout", "New Print Layout"], ["layoutMgr", "Layout Manager"], ["swatches", "Style Manager"],
  "grip", ["hand", "Pan Map", "on"], ["panSel", "Pan to Selection"], ["zoomIn", "Zoom In"], ["zoomOut", "Zoom Out"], ["zoomFull", "Zoom Full"], ["zoomSel", "Zoom to Selection"], ["zoomLayer", "Zoom to Layer"], ["zoom11", "Zoom to Native Resolution", "off"], ["zoomPrev", "Zoom Last"], ["zoomNext", "Zoom Next", "off"], ["mapNew", "New Map View"], ["bookmarkNew", "New Bookmark"], ["bookmarks", "Show Bookmarks"], ["refresh", "Refresh"],
  "grip", ["identify", "Identify Features"], ["action", "Run Feature Action", "drop"], ["select", "Select Features", "drop"], ["selectForm", "Select by Form", "drop"], ["deselect", "Deselect Features"], ["table", "Open Attribute Table"], ["abacus", "Field Calculator"], ["gear", "Toolbox"], ["sigma", "Statistics"], ["ruler", "Measure", "drop"], ["tips", "Map Tips"], ["textNote", "Text Annotation", "drop"],
];
const ROW_2 = [
  "grip0", ["dsManager", "Data Source Manager"], ["newGpkg", "New GeoPackage Layer"], ["newShp", "New Shapefile Layer"], ["newSpatialite", "New SpatiaLite Layer"], ["memory", "New Scratch Layer"],
  "div", ["virtual", "New Virtual Layer"],
  "grip", ["edits", "Current Edits", "off"], ["pencil", "Toggle Editing"], ["saveEdits", "Save Layer Edits", "off"], ["addPoly", "Add Polygon", "off"], ["vertex", "Vertex Tool", "off drop"], ["attrs", "Modify Attributes", "off"], ["trash", "Delete Selected", "off"], ["cut", "Cut Features", "off"], ["copy", "Copy Features", "off"], ["paste", "Paste Features", "off"], ["undo", "Undo", "off"], ["redo", "Redo", "off"],
  "grip", ["label", "Layer Labeling"], ["diagram", "Layer Diagram"],
  "div", ["labelPin", "Highlight Pinned Labels"], ["labelRed", "Toggle Unplaced Labels"],
  "div", ["labelPinOff", "Pin Labels", "off"], ["labelEye", "Show Labels", "off"], ["labelMove", "Move Label", "off"], ["labelRotate", "Rotate Label", "off"], ["labelEdit", "Change Label", "off"],
  "grip", ["webAdd", "MetaSearch"], ["webSearch", "Search Web Services", "on"],
  "grip", ["python", "Python Console"], ["fire", "Fire Plugin"], ["leaf", "Leaf Plugin"], ["earth", "Earth Engine"], ["clip", "Clipper"],
  "grip", ["help", "Help Contents"],
  "grip", ["topology", "Topology Checker"], ["gridSync", "Sync Table"],
];
const ROW_3 = ["grip0", ["chart", "Data Plotly"], "grip", ["qms", "QuickMapServices"], ["osm", "OSM Downloader"], "grip", "grip", ["osmSearch", "OSM Place Search"]];

const renderTools = (row) =>
  row.map((t, i) => {
    if (t === "grip0") return <Grip key={i} $first />;
    if (t === "grip") return <Grip key={i} />;
    if (t === "div") return <Divider key={i} />;
    const [name, label, flags = ""] = t;
    const has = (f) => flags.includes(f);
    return (
      <ToolButton key={name} aria-label={label} $on={has("on")} $off={has("off")} $drop={has("drop")} $raised={has("raised")}>
        <Icon name={name} />
        {has("drop") && <Caret />}
      </ToolButton>
    );
  });

/* ---------- body layout ---------- */

const Body = styled.main`
  flex: 1;
  display: flex;
  min-height: 0;
`;

const SideBar = styled.div`
  flex: none;
  display: flex;
  flex-direction: column;
  width: 51px;
  padding: 5px 0 0 3px;
  border-right: 1px solid #b9b9b9;
  background: linear-gradient(90deg, #fafafa, #eeeeee);
`;
const SideGrip = styled.span`
  width: 18px;
  height: 6px;
  margin: 0 0 2px 14px;
  ${dots}
`;
const SideButton = styled.button`
  display: flex;
  align-items: center;
  gap: 6px;
  height: 32px;
  padding-left: 4px;
`;
const SIDE = [["addVector"], ["addRaster"], ["addMesh"], ["addCsv"], ["addSpatialite"], ["addVirtual"], ["addPg", 1], ["addWms", 1], ["addXyz"], ["addWfs", 1], ["newGpkg", 1]];

const Dock = styled.aside`
  flex: none;
  display: flex;
  flex-direction: column;
  width: ${(p) => p.$w}px;
`;
const PanelHeader = styled.div`
  display: flex;
  align-items: center;
  gap: 2px;
  height: 20px;
  padding: 0 1px 0 4px;
`;
const PanelTitle = styled.h2`
  flex: 1;
  margin: 0;
  font-size: 11px;
  font-weight: 400;
`;
const PanelTools = styled.div`
  display: flex;
  align-items: center;
  gap: 1px;
  height: ${(p) => p.$h}px;
  padding: 0 0 2px 4px;
`;
const PanelTool = styled.button`
  display: flex;
  align-items: center;
  gap: 6px;
  width: ${(p) => (p.$drop ? 37 : 24)}px;
  height: 24px;
  padding: 0 3px;
  border: 1px solid ${(p) => (p.$on ? "#adadad" : "transparent")};
  border-radius: 2px;
  background: ${(p) => (p.$on ? "#dcdcdc" : "none")};
`;

const TreeFrame = styled.div`
  display: flex;
  flex: ${(p) => (p.$grow ? "1" : "none")};
  height: ${(p) => (p.$grow ? "auto" : "102px")};
  margin-bottom: ${(p) => (p.$grow ? 1 : 0)}px;
  border: 1px solid #b4b4b4;
  background: #fff;
  overflow: hidden;
`;
const Tree = styled.ul`
  flex: 1;
  margin: 0;
  padding: 0;
  list-style: none;
`;
const TreeRow = styled.li`
  display: flex;
  align-items: center;
  height: 18px;
  padding-left: 8px;
  gap: 6px;
`;
const ExpandSlot = styled.span`
  width: 10px;
`;
const LayerRow = styled.li`
  display: flex;
  align-items: center;
  gap: 6px;
  height: 18px;
  padding: 0 1px 0 24px;
  background: #0078d7;
  color: #fff;
  font-weight: 700;
  label { flex: 1; text-decoration: underline; }
  &::after { content: ""; width: 3px; height: 16px; background: #e9f3fb; }
`;
const Swatch = styled.span`
  display: block;
  flex: none;
  width: 16px;
  height: 16px;
  background: ${(p) => p.$c};
  border: 1px solid ${(p) => p.$b || "#5d7fa5"};
`;

const ScrollTrack = styled.div`
  flex: none;
  display: flex;
  flex-direction: column;
  width: 14px;
  border-left: 1px solid #b4b4b4;
  background: #e3e3e3;
`;
const ScrollArrow = styled.button`
  display: flex;
  align-items: center;
  justify-content: center;
  height: 14px;
  background: #fcfcfc;
  border-${(p) => (p.$end ? "top" : "bottom")}: 1px solid #b4b4b4;
  margin-top: ${(p) => (p.$end ? "auto" : "0")};
`;
const ScrollThumb = styled.div`
  flex: none;
  height: ${(p) => p.$size};
  background: #fcfcfc;
  border-bottom: 1px solid #b4b4b4;
`;
const ScrollBar = ({ thumb, noEnd }) => (
  <ScrollTrack>
    <ScrollArrow aria-label="Scroll up"><Caret $dir="up" /></ScrollArrow>
    <ScrollThumb $size={thumb} />
    {!noEnd && <ScrollArrow $end aria-label="Scroll down"><Caret /></ScrollArrow>}
  </ScrollTrack>
);

const Splitter = styled.div`
  flex: none;
  display: flex;
  align-items: center;
  justify-content: center;
  width: ${(p) => (p.$row ? "auto" : "6px")};
  height: ${(p) => (p.$row ? "6px" : "auto")};
  &::after {
    content: "";
    width: ${(p) => (p.$row ? 18 : 3)}px;
    height: ${(p) => (p.$row ? 3 : 18)}px;
    ${dots}
  }
`;

/* ---------- map ---------- */

const MapFrame = styled.section`
  flex: 1;
  min-width: 0;
  margin: 1px 0;
  border: 1px solid #b4b4b4;
  background: #fff;
  position: relative;
`;
const MapSvg = styled.svg`
  position: absolute;
  inset: 0;
  width: 100%;
  height: 100%;
`;

const NW = [0, 0], NE = [1050, 0], SW = [0, 795], SE = [1050, 795];
const at = ([dx, dy], s) => s.trim().split(/\s+/).map((p) => { const [x, y] = p.split(",").map(Number); return [x + dx, y + dy]; });

/* Adds small bends to long segments so the borders look surveyed rather than ruled. */
const roughen = (pts, amp) => {
  const out = [pts[0]];
  for (let i = 1; i < pts.length; i++) {
    const [x0, y0] = pts[i - 1], [x1, y1] = pts[i];
    const len = Math.hypot(x1 - x0, y1 - y0);
    const n = Math.floor(len / 8);
    for (let k = 1; k < n; k++) {
      const r = Math.sin(x0 * 12.9 + y1 * 78.2 + k * 37.7) * 43758.5;
      const d = (r - Math.floor(r) - 0.5) * amp;
      out.push([x0 + ((x1 - x0) * k) / n - ((y1 - y0) / len) * d, y0 + ((y1 - y0) * k) / n + ((x1 - x0) / len) * d]);
    }
    out.push([x1, y1]);
  }
  return out;
};
const toPath = (pts) => "M" + pts.map(([x, y]) => `${Math.round(x)} ${Math.round(y)}`).join("L");

const OUTLINE = [
  ...at(NW, "319,107 330,104 345,92 360,78 372,68 400,63 435,57 440,61 498,61 510,47 524,40 541,38 570,50 610,65 641,77 655,72 677,76 700,98 727,127 743,156 765,182 785,182 797,177 813,162 845,166 875,147 905,128 945,131 965,142 1000,170 1023,176 1050,196"),
  ...at(NE, "40,208 154,211 182,180 207,153 240,138 280,135 315,123 380,121 445,123 478,136 510,143 535,162 545,165 555,161 580,169 603,170 610,150 614,153 618,138 635,133 660,115 665,103 693,97 718,97 728,80 740,68 787,68 860,168 875,280 920,284 933,303 953,315 947,335 947,350 942,380 935,388 948,402 942,416 915,430 872,464 843,452 835,467 813,497 797,509 780,545 772,565 768,580 770,600 755,640 735,647 725,658 730,672 722,680 731,692 725,715 720,736 690,742 663,762 669,768"),
  ...at(SE, "668,0 665,18 653,38 655,62 641,66 630,85 603,85 590,110 570,112 562,120 567,155 560,165 562,190 540,213 530,235 530,262 517,266 502,282 495,300 500,333 480,335 457,362 460,385 445,408 437,410 427,420 417,424 405,418 383,417 380,392 358,393 340,373 337,353 310,335 300,322 295,350 288,358 240,361 232,340 190,380 168,380 158,423 144,421 136,432 122,433 115,452 104,452 92,478 65,493 25,530 18,550 29,570 20,610 15,640 0,660"),
  ...at(SW, "1035,680 1035,690 1020,703 1015,712 1005,700 1003,692 985,690 978,694 990,703 972,710 986,714 972,722 990,722 985,730 980,738 940,738 870,747 830,752 800,760 797,751 785,758 775,756 755,762 712,770 632,779 600,762 570,738 548,706 530,672 520,645 508,600 487,578 478,550 455,517 420,483 385,453 355,447 315,439 275,434 200,438 90,441 95,430 92,415 97,400 103,385 95,370 98,350 92,340 102,325 97,310 97,290 103,270 97,255 97,210 86,200 95,185 98,155 90,135 100,115 100,90 96,75 103,15 150,9"),
  ...at(NW, "163,780 158,750 185,712 192,712 190,690 225,680 235,647 247,635 232,618 240,592 255,588 265,590 275,560 260,537 258,500 252,483 242,482 218,455 221,394 244,380 238,355 244,340 238,325 242,258 285,223 313,182 319,150 319,107"),
];

const BORDERS = [
  [NW, "319,140 333,141 345,150 360,155 385,163 398,163 408,154 409,172 400,182 408,195 418,208 427,214 419,234 432,255 424,265 417,280 398,273 396,284 385,290 388,330 385,375 370,386 355,380 354,387 375,407 390,396 420,391 445,384"],
  [NW, "743,156 728,168 710,168 662,154 656,162 658,174 636,169 621,182 622,222 600,215 588,208 575,208 567,220 573,258 577,286 572,296 530,299 490,293 455,293 449,297 450,345 445,384"],
  [NW, "445,384 480,382 490,376 505,377 512,386 545,392 580,392 588,402 586,417 595,424 615,424 640,442 638,452 625,465 620,478 600,490 575,500 530,508 520,485 522,476 514,473 512,450 500,447 492,458 488,448 475,444 472,452 475,463 485,467 492,458"],
  [NW, "475,463 468,464 466,456 455,460 450,445 435,443 418,452 410,462 415,478 450,488 465,495 466,520 474,536 460,546 430,548 427,560 433,575 433,613 415,613 410,625 411,641 383,641 388,628 375,606 377,576 408,560 415,520 408,512 380,515 350,515 335,498 290,495 252,482"],
  [NW, "620,478 622,490 637,505 643,522 634,545 636,575 632,588 647,600 685,568 700,572 730,558 742,556 750,572 768,582 768,605 785,612 760,640 768,652 820,656 825,685 812,697 828,720 812,742 822,762"],
  [NW, "643,522 655,506 670,500 690,497 727,490 740,460 760,440"],
  [NW, "785,182 783,240 790,280 800,315 795,335 815,350 800,360 795,370 762,374 753,400 760,415 760,440"],
  [NW, "760,440 780,450 778,460 795,472 805,478 820,455 835,457 850,437 880,455 895,450 895,440 888,425 890,410 905,402 922,395 912,345 917,290 960,273 975,247"],
  [NW, "895,440 920,438 955,420 965,425 962,438 990,465 1010,472 1030,490 1030,545 1018,548 1020,557 1035,556 1050,573"],
  [NW, "1090,208 1087,222 1075,230 1050,230 1037,222 1035,215 1025,207 962,206 960,235 975,240 985,245 990,260 996,267 1008,248 1045,245 1050,265"],
  [NW, "247,635 262,650 285,655 290,668 300,670 308,682 325,684 370,738 415,772 425,798 460,787 475,797 485,810 515,822 550,840 583,860 620,860 650,865"],
  [NW, "352,823 335,823 295,810 292,798 285,790 270,790 257,797 257,817 235,830 205,845 175,853 163,852 125,882 100,885"],
  [SW, "352,28 340,42 325,60 333,80 360,137 377,155 378,170 388,178"],
  [NW, "822,762 835,766 810,802 790,785 745,785 743,907 780,907 832,899 872,845 872,805 875,785 890,765"],
  [NW, "822,762 835,766 865,755 880,752 890,768 918,768 925,757 950,775 955,795 953,813 970,800 985,788 1000,792 1020,820 1032,805 1040,790 1064,790"],
  [NW, "1060,615 1050,620 1037,640 1040,690 1030,710 1028,740 1043,765 1045,790"],
  [NE, "0,265 0,268 15,275 5,285 8,303 22,290 30,292 38,315 45,325 70,337 80,322 85,350 70,375 80,385 88,402 102,412 78,443"],
  [NE, "78,443 110,445 135,450 140,458 165,460 180,460 188,475 182,480 185,500 200,505 235,508 230,502 240,485 262,475 262,468 205,460 185,440 182,428 173,425 178,385 148,378 155,362 220,340 232,332 235,300 245,275 260,265 275,265 280,275 300,260"],
  [NE, "154,211 182,208 195,188 240,179 250,188 248,205 297,211 302,260 325,268 333,330 338,365 350,375 354,437 343,440 350,452 370,453"],
  [NE, "370,453 355,480 325,482 302,505 308,518 297,518 284,548 300,575 335,590 340,620 330,643 316,648 355,675 360,725"],
  [NE, "370,453 412,460 425,480 450,508 450,568 468,563 468,595 453,610 465,628 485,635 502,655"],
  [NE, "590,170 588,200 604,234 570,272 574,300 567,335 565,385 557,395 575,393 585,412 560,440 545,460 550,490 530,492 478,518 487,550 470,563"],
  [NE, "797,509 780,510 765,520 740,513 738,545 725,565 718,594 690,582 670,570 643,570 630,590 617,588 612,605 570,612 540,650 502,655"],
  [NE, "502,655 502,692 470,718 435,733 372,732 360,725 320,722 310,733 288,738"],
  [NE, "288,738 255,715 225,710 205,697 195,705 197,722 175,735 120,742 95,715 80,705 73,698 92,680 90,660 80,655 42,657 40,630 30,607 12,598 12,610 0,620"],
  [NE, "78,443 45,460 15,490 12,520 22,545 18,560 8,573 0,572"],
  [NE, "8,573 5,590 12,598"],
  [NE, "288,738 298,750 300,775 307,805 305,820 275,827 240,855 190,903 170,920 145,917"],
  [NE, "435,733 445,745 475,785 480,810 510,825 510,840 492,890 470,910 450,942 420,975 445,1010 455,995 468,998 490,1025 488,1060 502,1077"],
  [SE, "0,-5 8,-3 15,20 55,22 55,38 30,65 48,100 67,115 100,107 120,112 145,122 145,137 107,130 97,145 110,158 110,177 75,200 57,175 0,172"],
  [SE, "75,200 65,217 115,208 140,202 190,240 193,262 180,325 162,335 150,360 147,400 144,421"],
  [SE, "0,360 25,366 45,380 43,392 55,402 92,388 122,420 122,433"],
  [SW, "650,70 643,85 635,120 600,120 540,99 510,128 515,135 545,158 540,170"],
  [SW, "650,70 670,68 685,85 690,110 728,154 745,130 750,114"],
  [SW, "772,112 775,130 770,140 776,160 770,200 800,187 850,178 884,180 920,187 955,203 1000,222 998,180 1015,162 1030,160 1050,170"],
  [SW, "884,183 897,225 897,265 910,270 905,300 880,317 865,340"],
  [SW, "388,175 455,175 465,183 475,177 500,183 520,172 540,168 560,180 555,205 580,220 583,228 600,226 620,258 628,252 640,262 635,275 660,267 690,290 720,298 730,320 718,380 724,425"],
  [SW, "465,183 445,210 438,240 445,270 458,278 515,275 515,297 545,290 557,245 583,228"],
  [SW, "388,178 385,190 368,195 350,205 340,192 330,207 308,215 312,228 303,238 323,265 318,310 312,325"],
  [SW, "458,282 425,287 415,315 388,343 360,347 350,335 312,322"],
  [SW, "312,325 290,330 256,330 262,315 250,275 215,280 207,268 200,285 188,293 150,280 138,255 140,215 125,220 120,198 90,200"],
  [SW, "388,343 385,365 360,385 360,405 375,415 380,403 392,420 380,440 390,450 378,448"],
  [SW, "90,432 125,424 170,424 180,398 205,402 215,396 312,397 308,410 330,408 325,425 340,430 355,438 352,447"],
  [SW, "618,262 612,290 600,310 582,350 580,380 568,387 550,388 545,364 500,364 478,398 480,430 462,455 480,478 455,517"],
  [SW, "480,478 495,485 503,517 510,502 575,500 603,523 605,543 625,540 658,503 632,460 640,450 650,460 680,442 724,425"],
  [SW, "724,425 740,480 725,520 728,535 715,570 695,605 705,610"],
  [SW, "520,645 560,661 600,650 625,640 650,640 670,618 695,610"],
  [SW, "705,610 705,628 690,640 683,695 710,710 705,745 712,770"],
  [SW, "724,418 745,410 745,390 765,380 765,370 775,385 790,392 795,400 785,430 800,460 803,485 822,500"],
  [SW, "770,378 810,355 850,326 865,342 885,362 915,365 918,375 912,402 890,405 895,425 890,505 885,515 870,505 822,500"],
  [SW, "912,402 925,418 935,392 975,380 990,395 1035,380 1037,370 1050,362"],
  [SW, "990,395 1007,435 1000,455 990,500 950,512 935,508 935,530 920,550"],
  [SW, "720,550 755,540 785,518 840,518 838,535 845,570 825,605 820,632 780,628 740,620 735,590 722,585 720,550"],
  [SW, "822,500 822,515"],
  [SW, "870,505 858,527 900,533 920,550 922,585 932,605"],
  [SW, "820,632 815,670 800,685 835,685 853,692 860,630 870,612 885,605 880,590 890,583 912,595 915,610 932,605"],
  [SW, "853,692 863,725 870,748"],
  [SW, "915,610 945,628 950,655 985,690"],
];

const MapCanvas = () => (
  <MapFrame aria-label="Map canvas">
    <MapSvg viewBox="3 0 2082 1614" role="img" aria-label="Nigeria provinces">
      <g stroke="#232323" strokeWidth="3" strokeLinejoin="round" fill="none">
        <path d={toPath(roughen(OUTLINE, 3)) + "Z"} fill="#fdebe3" />
        {BORDERS.map(([tile, s]) => (
          <path key={tile.join() + s} d={toPath(roughen(at(tile, s), 4))} />
        ))}
      </g>
    </MapSvg>
  </MapFrame>
);

/* ---------- layer styling dock ---------- */

const LayerChooser = styled.div`
  display: flex;
  padding: 3px 3px 0;
`;
const StyleMain = styled.div`
  flex: 1;
  display: flex;
  gap: 3px;
  min-height: 0;
  padding: 0 3px;
`;
const IconSlot = styled.span`
  padding-left: ${(p) => p.$pad || 5}px;
`;
const TabColumn = styled.div`
  flex: none;
  display: flex;
  flex-direction: column;
  width: 38px;
  margin-bottom: 4px;
`;
const ActiveTab = styled.button`
  display: flex;
  align-items: center;
  justify-content: center;
  height: 38px;
  padding-top: 6px;
`;
const DarkTabs = styled.div`
  flex: 1;
  display: flex;
  flex-direction: column;
  align-items: flex-start;
  gap: 10px;
  padding: 5px 0 0 4px;
  background: #5c5c5c;
`;
const StyleContent = styled.div`
  flex: 1;
  min-width: 0;
  display: flex;
  flex-direction: column;
  padding-top: 6px;
`;
const SymbolRow = styled.div`
  display: flex;
  gap: 6px;
  margin-top: 6px;
  height: 136px;
`;
const Preview = styled.div`
  flex: 1;
  display: flex;
  align-items: center;
  justify-content: center;
  &::after {
    content: "";
    width: 61px;
    height: 61px;
    background: #fdebe3;
    border: 1px solid #222;
  }
`;
const SymbolTree = styled.ul`
  width: 102px;
  margin: 0;
  padding: 0;
  list-style: none;
  background: #fff;
  border: 1px solid #b4b4b4;
`;
const SymbolItem = styled.li`
  display: flex;
  align-items: center;
  gap: ${(p) => (p.$child ? 6 : 8)}px;
  height: 18px;
  padding-left: ${(p) => (p.$child ? 43 : 6)}px;
  background: ${(p) => (p.$child ? "none" : "#f0f0f0")};
  font-weight: ${(p) => (p.$child ? 400 : 700)};
`;
const SymbolButtons = styled.div`
  display: grid;
  grid-template-columns: 28px 28px;
  grid-auto-rows: 24px;
  gap: 5px 6px;
  padding-top: 1px;
`;
const SmallButton = styled.button`
  display: flex;
  align-items: center;
  justify-content: center;
  min-width: ${(p) => p.$w || 24}px;
  height: ${(p) => p.$h || 24}px;
  border: 1px solid ${(p) => (p.$off ? "#cbcbcb" : "#adadad")};
  border-radius: 3px;
  background: linear-gradient(#fdfdfd, #f0f0f0);
  font-family: ${FORM_FONT};
  & > svg { opacity: ${(p) => (p.$off ? 0.4 : 1)}; }
`;
const Rule = styled.hr`
  width: 100%;
  height: 2px;
  margin: ${(p) => p.$m};
  border: 0;
  border-top: 1px solid #a0a0a0;
  background: #fff;
`;
const ScrollArea = styled.div`
  flex: 1;
  display: flex;
  gap: 9px;
  min-height: 0;
`;
const ScrollBody = styled.div`
  flex: 1;
  min-width: 0;
  display: flex;
  flex-direction: column;
`;
const ScrollSide = styled.div`
  display: flex;
  padding-top: 6px;
`;
const FormGrid = styled.div`
  display: grid;
  grid-template-columns: 37px 1fr;
  grid-auto-rows: 22px;
  align-items: center;
  align-content: start;
  padding-top: 6px;
  min-height: 139px;
  font-family: ${FORM_FONT};
  font-size: 11px;
  label { white-space: nowrap; }
`;
const FormCell = styled.div`
  display: flex;
  align-items: center;
  gap: ${(p) => (p.$tight ? 0 : 4)}px;
  min-width: 0;
`;
const Slider = styled.input.attrs({ type: "range" })`
  appearance: none;
  flex: 1;
  min-width: 0;
  height: 14px;
  margin-left: 2px;
  outline: none;
  &::-webkit-slider-runnable-track {
    height: 5px;
    background: #1a8be8;
    border: 1px solid #1269b4;
    border-radius: 2px;
  }
  &::-webkit-slider-thumb {
    appearance: none;
    width: 13px;
    height: 13px;
    margin-top: -5px;
    background: #fdfdfd;
    border: 1px solid #8f8f8f;
    border-radius: 3px;
  }
`;
const ColorButton = styled.button`
  flex: 1;
  height: 22px;
  padding: 3px 4px;
  border: 1px solid #adadad;
  border-radius: 3px;
  background: #f8f8f8;
  &::after {
    content: "";
    display: block;
    height: 100%;
    background: #fdebe3;
  }
`;
const ColorDrop = styled.button`
  display: flex;
  align-items: center;
  justify-content: center;
  width: 12px;
  height: 22px;
  border: 1px solid #adadad;
  border-radius: 3px;
  background: #fafafa;
`;
const SymbolSearch = styled.div`
  display: flex;
  align-items: center;
  gap: 10px;
  margin-top: 5px;
`;
const ClearButton = styled.button`
  padding-right: 9px;
`;
const SwatchSlot = styled.button`
  padding-right: 4px;
`;
const SymbolList = styled.div`
  flex: 1;
  display: flex;
  min-height: 53px;
  margin-top: 5px;
  border: 1px solid #b4b4b4;
  border-bottom: 0;
  background: #fff;
`;
const Thumbs = styled.div`
  flex: 1;
  display: flex;
  gap: 37px;
  padding: 20px 0 0 21px;
`;
const Thumb = styled.div`
  width: 64px;
  border: 1px solid ${(p) => p.$b};
  border-bottom: 0;
  background: ${(p) => p.$bg};
`;
const Rendering = styled.button`
  display: flex;
  align-items: center;
  gap: 8px;
  height: 36px;
  padding: 4px 0 0 6px;
  font-family: ${FORM_FONT};
  font-size: 11px;
  font-weight: 700;
`;
const ApplyRow = styled.div`
  display: flex;
  align-items: center;
  gap: 6px;
  height: 22px;
  margin-bottom: 5px;
`;
const LiveSlot = styled.div`
  flex: 1;
  display: flex;
  justify-content: flex-end;
  padding-right: 6px;
`;
const DockTabs = styled.div`
  display: flex;
  height: 25px;
  border-top: 1px solid #b4b4b4;
`;
const DockTab = styled.button`
  height: ${(p) => (p.$on ? 22 : 20)}px;
  margin-top: ${(p) => (p.$on ? -1 : 0)}px;
  padding: 0 10px;
  border: 1px solid #b4b4b4;
  border-top: 0;
  border-left-width: ${(p) => (p.$on ? 1 : 0)}px;
  background: ${(p) => (p.$on ? "#f3f3f3" : "#dadada")};
  font-family: ${FORM_FONT};
  font-size: 11px;
  white-space: nowrap;
`;
const Watermark = styled.div`
  position: absolute;
  right: 55px;
  bottom: 32px;
  width: 238px;
  color: rgba(130, 130, 130, 0.55);
  font-size: 14px;
  line-height: 20px;
  white-space: nowrap;
  pointer-events: none;
  strong {
    display: block;
    font-size: 19px;
    font-weight: 400;
    line-height: 25px;
  }
`;

/* ---------- status bar ---------- */

const StatusBar = styled.footer`
  display: flex;
  align-items: center;
  height: 26px;
  padding: 0 7px 0 3px;
  font-family: ${FORM_FONT};
  font-size: 11px;
`;
const Message = styled.output`
  flex: 1;
  padding-left: 7px;
  white-space: nowrap;
`;
const StatusGroup = styled.div`
  display: flex;
  align-items: center;
  gap: 4px;
  margin-left: ${(p) => p.$ml || 7}px;
  white-space: nowrap;
`;

const MENUS = [["Project", 3], ["Edit", 0], ["View", 0], ["Layer", 0], ["Settings", 0], ["Plugins", 0], ["Vector", 4], ["Raster", 0], ["Database", 0], ["Web", 0], ["Mesh", 0], ["Processing", 3], ["Help", 0]];

const BROWSER = [["favorite", "Favorites", false], ["book", "Spatial Bookmarks", true], ["gpkg", "GeoPackage", true], ["home", "Home", true], ["feather", "SpatiaLite", true], ["elephant", "PostGIS", false]];

const Header = ({ title }) => (
  <PanelHeader>
    <PanelTitle>{title}</PanelTitle>
    <button aria-label={`Float ${title}`}><Icon name="float" size={12} /></button>
    <button aria-label={`Close ${title}`}><Icon name="close" size={12} /></button>
  </PanelHeader>
);

export default function App() {
  return (
    <>
      <Global />
      <Window>
        <TitleBar>
          <Icon name="logo" size={16} />
          <Title>*Untitled Project - QGIS</Title>
          <WindowButton aria-label="Minimize"><Icon name="minimize" size={12} /></WindowButton>
          <WindowButton aria-label="Restore"><Icon name="restore" size={12} /></WindowButton>
          <WindowButton aria-label="Close"><Icon name="quit" size={12} /></WindowButton>
        </TitleBar>
        <MenuBar>
          {MENUS.map(([m, i]) => (
            <MenuItem key={m}>{m.slice(0, i)}<u>{m[i]}</u>{m.slice(i + 1)}</MenuItem>
          ))}
        </MenuBar>
        <Toolbar>{renderTools(ROW_1)}</Toolbar>
        <Toolbar>{renderTools(ROW_2)}</Toolbar>
        <Toolbar $h={38}>
          {renderTools(ROW_3)}
          <SearchGroup>
            <Field $w={80} $combo>
              <Combo aria-label="Country"><option>Ghana</option></Combo>
              <CaretSlot><Caret /></CaretSlot>
            </Field>
            <Field $grow>
              <TextInput $pad={2} aria-label="Place search" placeholder="Search for..." />
            </Field>
          </SearchGroup>
        </Toolbar>

        <Body>
          <SideBar>
            <SideGrip />
            {SIDE.map(([name, drop]) => (
              <SideButton key={name} aria-label={name}>
                <Icon name={name} />
                {drop && <Caret />}
              </SideButton>
            ))}
          </SideBar>

          <Dock $w={283}>
            <Header title="Browser" />
            <PanelTools $h={31}>
              {["addSel", "refresh", "funnel", "collapse", "info"].map((n) => (
                <PanelTool key={n} aria-label={n}><Icon name={n} size={16} /></PanelTool>
              ))}
            </PanelTools>
            <TreeFrame>
              <Tree>
                {BROWSER.map(([icon, label, open]) => (
                  <TreeRow key={label}>
                    <ExpandSlot>{open && <Caret $dir="right" />}</ExpandSlot>
                    <Icon name={icon} size={16} />
                    <span>{label}</span>
                  </TreeRow>
                ))}
              </Tree>
              <ScrollBar thumb="27px" />
            </TreeFrame>
            <Splitter $row />
            <Header title="Layers" />
            <PanelTools $h={30}>
              <PanelTool $on aria-label="Open Layer Styling"><Icon name="brush" size={16} /></PanelTool>
              <PanelTool aria-label="Add Group"><Icon name="stackAdd" size={16} /></PanelTool>
              <PanelTool aria-label="Manage Map Themes"><Icon name="eye" size={16} /></PanelTool>
              <PanelTool aria-label="Filter Legend"><Icon name="funnel" size={16} /></PanelTool>
              <PanelTool $drop aria-label="Filter by Expression"><Icon name="epsilon" size={16} /><Caret /></PanelTool>
              <PanelTool aria-label="Expand All"><Icon name="expand" size={16} /></PanelTool>
              <PanelTool aria-label="Collapse All"><Icon name="collapse" size={16} /></PanelTool>
              <PanelTool aria-label="Remove Layer"><Icon name="removeLayer" size={16} /></PanelTool>
            </PanelTools>
            <TreeFrame $grow>
              <Tree>
                <LayerRow>
                  <Check id="layer" defaultChecked />
                  <Swatch $c="#b0c7e2" $b="#8fb4dd" />
                  <label htmlFor="layer">nigeria_provinces [37]</label>
                </LayerRow>
              </Tree>
            </TreeFrame>
          </Dock>
          <Splitter />

          <MapCanvas />
          <Splitter />

          <Dock $w={323}>
            <Header title="Layer Styling" />
            <LayerChooser>
              <Field $grow $h={24} $combo>
                <IconSlot><Icon name="polygon" size={16} /></IconSlot>
                <Combo aria-label="Layer" $pad={2}><option>nigeria_provinces</option></Combo>
                <CaretSlot $w={22}><Caret /></CaretSlot>
              </Field>
            </LayerChooser>
            <StyleMain>
              <TabColumn>
                <ActiveTab aria-label="Symbology"><Icon name="tabBrush" size={22} /></ActiveTab>
                <DarkTabs>
                  <button aria-label="Labels"><Icon name="labelTab" size={22} /></button>
                  <button aria-label="3D View"><Icon name="cube" size={22} /></button>
                  <button aria-label="Masks"><Icon name="maskTree" size={22} /></button>
                  <button aria-label="History"><Icon name="history" size={22} /></button>
                </DarkTabs>
              </TabColumn>
              <StyleContent>
                <Field $h={24} $combo>
                  <IconSlot><Icon name="single" size={16} /></IconSlot>
                  <Combo aria-label="Renderer" $pad={2}><option>Single symbol</option></Combo>
                  <CaretSlot $w={22}><Caret /></CaretSlot>
                </Field>
                <SymbolRow>
                  <Preview />
                  <SymbolTree>
                    <SymbolItem><Caret /><Swatch $c="#b0c7e2" />Fill</SymbolItem>
                    <SymbolItem $child><Swatch $c="#fdebe3" $b="#888" />Sim...</SymbolItem>
                  </SymbolTree>
                  <SymbolButtons>
                    <SmallButton aria-label="Add symbol layer"><Icon name="plusBig" size={15} /></SmallButton>
                    <SmallButton $off aria-label="Move up"><Icon name="triUp" size={15} /></SmallButton>
                    <SmallButton $off aria-label="Remove symbol layer"><Icon name="minusBig" size={15} /></SmallButton>
                    <SmallButton $off aria-label="Move down"><Icon name="triDown" size={15} /></SmallButton>
                    <SmallButton $off aria-label="Duplicate"><Icon name="dup" size={15} /></SmallButton>
                    <SmallButton $off aria-label="Lock color"><Icon name="lockOpen" size={15} /></SmallButton>
                  </SymbolButtons>
                </SymbolRow>
                <Rule $m="6px 0 1px" />
                <ScrollArea>
                  <ScrollBody>
                    <FormGrid>
                      <label htmlFor="unit">Unit</label>
                      <Field $combo>
                        <Combo id="unit"><option>Millimeters</option></Combo>
                        <CaretSlot><Caret /></CaretSlot>
                      </Field>
                      <label htmlFor="opacity">Opacity</label>
                      <FormCell>
                        <Slider id="opacity" min="0" max="100" defaultValue="100" />
                        <Spin w={100} h={20} value="100.0 %" label="Opacity value" />
                      </FormCell>
                      <label htmlFor="color">Color</label>
                      <FormCell $tight>
                        <ColorButton id="color" />
                        <ColorDrop aria-label="Color menu"><Caret /></ColorDrop>
                      </FormCell>
                    </FormGrid>
                    <Rule $m="0" />
                    <SymbolSearch>
                      <Field $grow>
                        <IconSlot $pad={10}><Icon name="search" size={13} /></IconSlot>
                        <TextInput $pad={5} aria-label="Symbol group" defaultValue="All Symbols" />
                        <ClearButton aria-label="Clear"><Icon name="clear" size={13} /></ClearButton>
                        <CaretSlot $split><Caret /></CaretSlot>
                      </Field>
                      <SwatchSlot aria-label="Style Manager"><Icon name="swatches" size={16} /></SwatchSlot>
                    </SymbolSearch>
                    <SymbolList>
                      <Thumbs>
                        <Thumb $b="#222" $bg="radial-gradient(circle at 0 0, #1a0590, #7a02a8 25px, #cc4778 44px, #f0804e 60px, #fba238 72px)" />
                        <Thumb $b="#b8b84a" $bg="linear-gradient(#555, #999)" />
                      </Thumbs>
                      <ScrollBar thumb="27px" noEnd />
                    </SymbolList>
                  </ScrollBody>
                  <ScrollSide><ScrollBar thumb="65%" /></ScrollSide>
                </ScrollArea>
                <Rendering><Caret $dir="right" $size={6} />Layer Rendering</Rendering>
                <ApplyRow>
                  <SmallButton $h={22} aria-label="Undo"><Icon name="undoColor" size={15} /></SmallButton>
                  <SmallButton $h={22} aria-label="Redo"><Icon name="redoColor" size={15} /></SmallButton>
                  <LiveSlot><CheckLabel><Check defaultChecked />Live update</CheckLabel></LiveSlot>
                  <SmallButton $w={80} $h={22}>Apply</SmallButton>
                </ApplyRow>
              </StyleContent>
            </StyleMain>
            <DockTabs>
              <DockTab $on>Layer Styling</DockTab>
              <DockTab>Processing Toolbox</DockTab>
              <DockTab>Search QMS</DockTab>
            </DockTabs>
          </Dock>
        </Body>

        <StatusBar>
          <Field $w={200}>
            <IconSlot $pad={8}><Icon name="search" size={13} /></IconSlot>
            <TextInput $pad={6} aria-label="Locator" placeholder="Type to locate (Ctrl+K)" />
          </Field>
          <Message>Toggles the editing state of the current layer</Message>
          <StatusGroup>
            <label htmlFor="coord">Coordinate</label>
            <Field $w={76}><TextInput id="coord" $align="center" defaultValue="6.95,4.07" /></Field>
            <Icon name="mouse" size={16} />
          </StatusGroup>
          <StatusGroup $ml={12}>
            <label htmlFor="scale">Scale</label>
            <Field $w={80}>
              <Combo id="scale"><option>1:7057986</option></Combo>
              <CaretSlot $split><Caret /></CaretSlot>
            </Field>
          </StatusGroup>
          <StatusGroup $ml={12}>
            <Icon name="lock" size={14} />
            <label htmlFor="magnifier">Magnifier</label>
            <Spin w={87} id="magnifier" value="100%" />
          </StatusGroup>
          <StatusGroup $ml={8}>
            <label htmlFor="rotation">Rotation</label>
            <Spin w={84} id="rotation" value="0.0 °" />
          </StatusGroup>
          <StatusGroup $ml={6}>
            <CheckLabel><Check defaultChecked />Render</CheckLabel>
          </StatusGroup>
          <StatusGroup $ml={18}>
            <Icon name="crs" size={14} />
            <a href="#crs">EPSG:4326</a>
          </StatusGroup>
          <StatusGroup $ml={19}>
            <button aria-label="Messages"><Icon name="bubble" size={16} /></button>
          </StatusGroup>
        </StatusBar>

        <Watermark aria-hidden="true">
          <strong>Activate Windows</strong>
          Go to Settings to activate Windows.
        </Watermark>
      </Window>
    </>
  );
}
